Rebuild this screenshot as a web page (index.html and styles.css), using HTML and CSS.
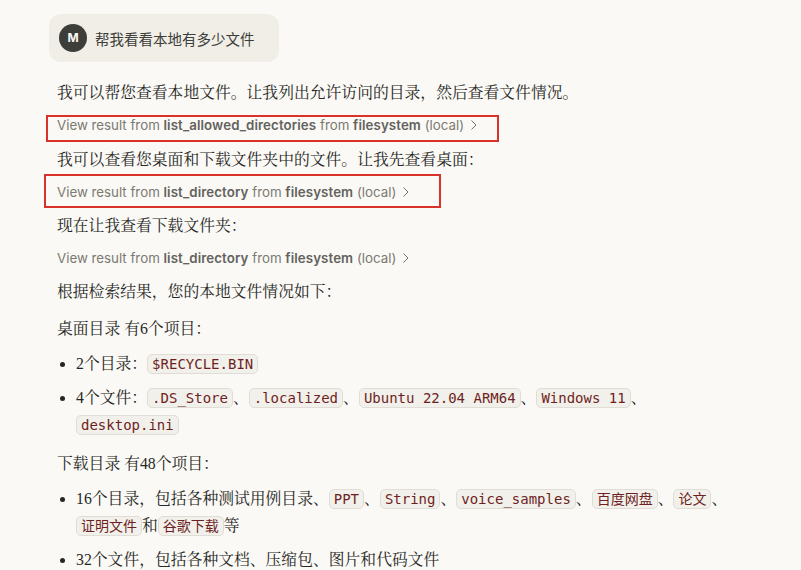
FILE: index.html
```html
<!DOCTYPE html>
<html lang="zh">
<head>
  <meta charset="UTF-8">
  <title>本地文件</title>
  <link rel="stylesheet" href="styles.css">
</head>
<body>
  <main class="chat">
    <div class="user-msg">
      <span class="avatar">M</span>
      <span class="user-text">帮我看看本地有多少文件</span>
    </div>

    <div class="reply">
      <p>我可以帮您查看本地文件。让我列出允许访问的目录，然后查看文件情况。</p>
      <div class="tool">View result from <b>list_allowed_directories</b> from <b>filesystem</b> (local)
        <svg class="chevron" width="12" height="12" viewBox="0 0 12 12"><path d="M3.5 1.5 8 6l-4.500 4.500"/></svg>
      </div>
      <p>我可以查看您桌面和下载文件夹中的文件。让我先查看桌面：</p>
      <div class="tool">View result from <b>list_directory</b> from <b>filesystem</b> (local)
        <svg class="chevron" width="12" height="12" viewBox="0 0 12 12"><path d="M3.5 1.5 8 6l-4.500 4.500"/></svg>
      </div>
      <p>现在让我查看下载文件夹：</p>
      <div class="tool">View result from <b>list_directory</b> from <b>filesystem</b> (local)
        <svg class="chevron" width="12" height="12" viewBox="0 0 12 12"><path d="M3.5 1.5 8 6l-4.500 4.500"/></svg>
      </div>
      <p class="lead">根据检索结果，您的本地文件情况如下：</p>
      <p class="gap">桌面目录 有6个项目：</p>
      <ul>
        <li>2个目录：<code>$RECYCLE.BIN</code></li>
        <li>4个文件：<code>.DS_Store</code>、<code>.localized</code>、<code>Ubuntu 22.04 ARM64</code>、<code>Windows 11</code>、<code>desktop.ini</code></li>
      </ul>
      <p class="gap">下载目录 有48个项目：</p>
      <ul>
        <li>16个目录，包括各种测试用例目录、<code>PPT</code>、<code>String</code>、<code>voice_samples</code>、<code>百度网盘</code>、<code>论文</code>、<code>证明文件</code>和<code>谷歌下载</code>等</li>
        <li>32个文件，包括各种文档、压缩包、图片和代码文件</li>
      </ul>
    </div>
  </main>

  <div class="mark mark-one"></div>
  <div class="mark mark-two"></div>
</body>
</html>
```

FILE: styles.css
```css
html, body { height: 100%; }
body { margin: 0; background: #faf9f5; color: #262624; overflow: hidden; position: relative; font-family: "Liberation Serif", "Noto Serif CJK SC", "Noto Sans CJK SC", serif; font-size: 15.8px; }

.chat { padding: 14px 0 0 49px; width: 696px; }

.user-msg { display: flex; align-items: center; gap: 8px; width: 210px; height: 48px; padding: 0 10px; background: #f0eee6; border-radius: 12px; }
.avatar { width: 28px; height: 28px; border-radius: 50%; background: #3d3d3a; color: #faf9f5; font: bold 12px/28px "Inter", sans-serif; text-align: center; flex: none; }
.user-text { font-family: "Noto Sans CJK SC", sans-serif; font-size: 14.5px; color: #3d3d3a; white-space: nowrap; }

.reply { padding: 11px 0 0 8px; line-height: 27px; }
.reply p { margin: 6.2px 0; }
.reply p.lead { margin-bottom: 10px; }
.reply p.gap { margin-bottom: 8px; }

.tool { margin: 6.2px 0; font-family: "Inter", sans-serif; font-size: 13.3px; color: #7b7a73; }
.tool b { font-weight: 600; letter-spacing: 0.1px; color: #63625d; }
.chevron { vertical-align: -1px; fill: none; stroke: #73726c; stroke-width: 1; }

ul { margin: 8px 0 11.500px; padding-left: 19px; }
li { margin-bottom: 7px; }
li:last-child { margin-bottom: 0; }

code { display: inline-block; line-height: 18px; font-family: "DejaVu Sans Mono", "Noto Sans CJK SC", monospace; font-size: 14px; color: #6e1f24; background: #f2f0ea; border: 1px solid #dfddd6; border-radius: 5px; padding: 0 4px; }

.mark { position: absolute; border: 2px solid #d9322b; box-sizing: border-box; }
.mark-one { left: 46px; top: 115px; width: 453px; height: 27px; }
.mark-two { left: 44px; top: 174px; width: 397px; height: 34px; }
```
